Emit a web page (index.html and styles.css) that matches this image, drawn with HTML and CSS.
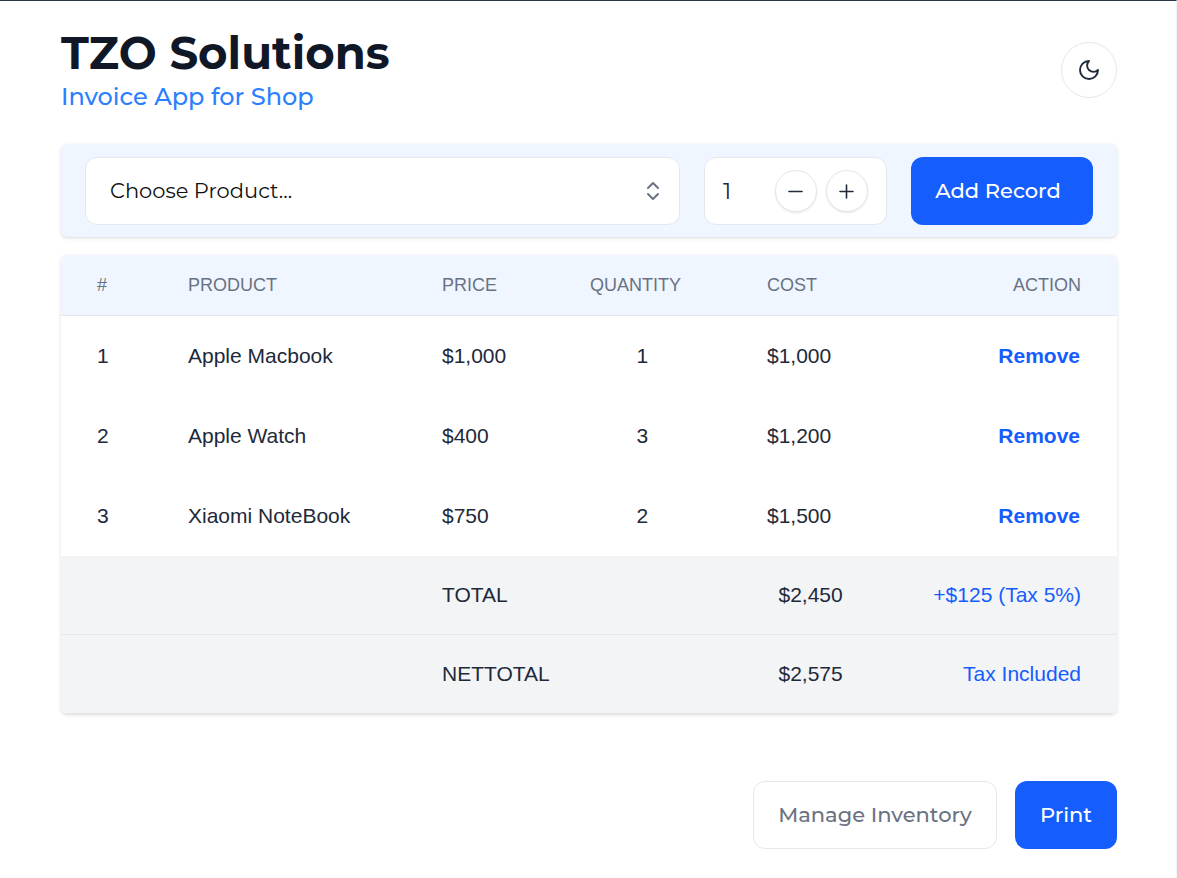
FILE: index.html
```
<!DOCTYPE html>
<html lang="en">
<head>
<meta charset="utf-8">
<title>TZO Solutions</title>
<link rel="stylesheet" href="styles.css">
</head>
<body>
<div class="page">
  <header class="header">
    <div class="brand">
      <h1 class="title">TZO Solutions</h1>
      <p class="subtitle">Invoice App for Shop</p>
    </div>
    <button class="theme" aria-label="Dark mode">
      <svg width="24" height="24" viewBox="0 0 24 24" fill="none" stroke="currentColor" stroke-width="1.9" stroke-linecap="round" stroke-linejoin="round"><path d="M12 3a6 6 0 0 0 9 9 9 9 0 1 1-9-9Z"/></svg>
    </button>
  </header>

  <section class="toolbar">
    <div class="select">
      <span class="select-text">Choose Product...</span>
      <svg class="chevrons" width="14" height="20" viewBox="0 0 14 20" fill="none" stroke="currentColor" stroke-width="2" stroke-linecap="round" stroke-linejoin="round"><path d="M2 7 7 2 12 7M2 13 7 18 12 13"/></svg>
    </div>
    <div class="counter">
      <span class="count">1</span>
      <button class="round" aria-label="Decrease"><svg width="16" height="16" viewBox="0 0 16 16" stroke="currentColor" stroke-width="1.6" stroke-linecap="round"><path d="M1 8.500h13"/></svg></button>
      <button class="round" aria-label="Increase"><svg width="16" height="16" viewBox="0 0 16 16" stroke="currentColor" stroke-width="1.6" stroke-linecap="round"><path d="M1 8.500h13M7.500 2v13"/></svg></button>
    </div>
    <button class="button primary add"><span>Add Record</span></button>
  </section>

  <section class="records">
    <div class="row head"><span>#</span><span>PRODUCT</span><span>PRICE</span><span>QUANTITY</span><span>COST</span><span class="end">ACTION</span></div>
    <div class="row"><span>1</span><span>Apple Macbook</span><span>$1,000</span><span class="qty">1</span><span>$1,000</span><a class="end remove">Remove</a></div>
    <div class="row"><span>2</span><span>Apple Watch</span><span>$400</span><span class="qty">3</span><span>$1,200</span><a class="end remove">Remove</a></div>
    <div class="row"><span>3</span><span>Xiaomi NoteBook</span><span>$750</span><span class="qty">2</span><span>$1,500</span><a class="end remove">Remove</a></div>
    <div class="row foot"><span></span><span></span><span>TOTAL</span><span></span><span class="sum">$2,450</span><span class="end tax">+$125 (Tax 5%)</span></div>
    <div class="row foot"><span></span><span></span><span>NETTOTAL</span><span></span><span class="sum">$2,575</span><span class="end tax">Tax Included</span></div>
  </section>

  <footer class="actions">
    <button class="button outline manage"><span>Manage Inventory</span></button>
    <button class="button primary print"><span>Print</span></button>
  </footer>
</div>
</body>
</html>
```
FILE: styles.css
```
* { box-sizing: border-box; }
body { margin: 0; background: #fff; color: #1e2939; font-family: Montserrat, Inter, sans-serif; }
button { font: inherit; color: inherit; margin: 0; padding: 0; background: #fff; }
.page { height: 878px; padding: 26px 59px 0 61px; border-top: 1px solid #273849; border-right: 1px solid #f3f4f6; overflow: hidden; }

.header { display: flex; justify-content: space-between; height: 117px; }
.brand { white-space: nowrap; }
.title { margin: 0; font-size: 45px; line-height: 52px; font-weight: 700; color: #101828; }
.subtitle { margin: 3px 0 0; font-size: 24px; line-height: 30px; font-weight: 500; color: #2b7fff; }
.theme { display: grid; place-items: center; width: 56px; height: 56px; margin-top: 15px; border: 1px solid #e5e7eb; border-radius: 50%; }

.toolbar { display: flex; height: 93px; padding: 13px 24px 12px 24px; background: #eff6ff; border-radius: 6px; box-shadow: 0 1px 4px rgba(0,0,0,.1), 0 1px 2px rgba(0,0,0,.06); }
.select { display: flex; align-items: center; justify-content: space-between; width: 595px; margin-right: 24px; padding: 0 19px 0 24px; color: #101010; background: #fff; border: 1px solid #e5e7eb; border-radius: 12px; }
.select-text { padding-bottom: 2px; font-size: 21px; }
.chevrons { color: #6a7282; }
.counter { display: flex; align-items: center; gap: 9px; width: 183px; margin-right: 24px; padding: 0 18px; background: #fff; border: 1px solid #e5e7eb; border-radius: 12px; }
.count { flex: 1; font-size: 23px; font-weight: 400; }
.round { display: grid; place-items: center; width: 42px; height: 42px; border: 1px solid #e5e7eb; border-radius: 50%; box-shadow: 0 1px 2px rgba(0,0,0,.1); }
.button { height: 68px; border-radius: 12px; border: 0; font-size: 21px; font-weight: 500; white-space: nowrap; text-align: center; }
.primary { background: #155dfc; color: #fff; }
.outline { border: 1px solid #e5e7eb; color: #6a7282; }
.add { width: 182px; padding: 0 8px 2px 0; }

.records { margin-top: 18px; font-family: "Liberation Sans", Arial, sans-serif; border-radius: 6px; overflow: hidden; box-shadow: 0 1px 4px rgba(0,0,0,.1), 0 1px 2px rgba(0,0,0,.06); }
.row { display: grid; grid-template-columns: 91px 254px 148px 177px 150px 1fr; align-items: center; height: 80px; padding: 0 36px; font-size: 21px; line-height: 30px; white-space: nowrap; }
.head { height: 61px; padding-bottom: 1px; font-size: 18px; color: #6a7282; background: #eff6ff; border-bottom: 1px solid #e5e7eb; }
.foot { height: 79px; padding-bottom: 1px; background: #f3f4f6; border-bottom: 1px solid #e5e7eb; }
.qty { padding-left: 46.500px; }
.sum { padding-left: 11.500px; }
.end { text-align: right; }
.remove { padding-right: 1px; font-weight: 700; color: #155dfc; }
.tax { color: #155dfc; }

.actions { display: flex; justify-content: flex-end; gap: 18px; margin-top: 67px; }
.manage { width: 244px; padding-bottom: 1px; }
.print { width: 102px; padding-bottom: 1px; }
```
